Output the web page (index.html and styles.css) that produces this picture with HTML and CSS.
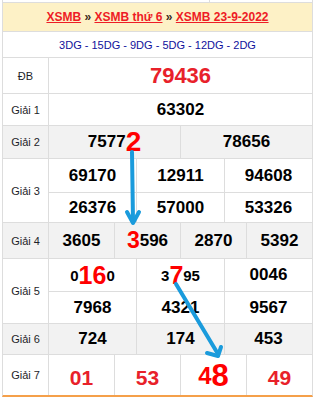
FILE: index.html
```html
<!DOCTYPE html>
<html lang="vi">
<head>
<meta charset="utf-8">
<title>XSMB 23-9-2022</title>
<link rel="stylesheet" href="styles.css">
</head>
<body>
<div class="screen">
  <div class="sheet">
    <div class="stub"><div class="stub-cell"></div><div></div></div>
    <div class="head"><a href="#">XSMB</a> » <a href="#">XSMB thứ 6</a> » <a href="#">XSMB 23-9-2022</a></div>
    <div class="codes">3DG - 15DG - 9DG - 5DG - 12DG - 2DG</div>

    <div class="row c1 h-db">
      <div class="lbl">ĐB</div>
      <div class="cell db">79436</div>
    </div>
    <div class="row c1 h-g1">
      <div class="lbl">Giải 1</div>
      <div class="cell">63302</div>
    </div>
    <div class="row c2 h-g2 shade">
      <div class="lbl">Giải 2</div>
      <div class="cell">7577<span class="hot hot-lg">2</span></div>
      <div class="cell">78656</div>
    </div>
    <div class="row c3 h-g3">
      <div class="lbl tall">Giải 3</div>
      <div class="cell">69170</div>
      <div class="cell">12911</div>
      <div class="cell">94608</div>
      <div class="cell">26376</div>
      <div class="cell">57000</div>
      <div class="cell">53326</div>
    </div>
    <div class="row c4 h-g4 shade">
      <div class="lbl">Giải 4</div>
      <div class="cell">3605</div>
      <div class="cell"><span class="hot hot-sm">3</span>596</div>
      <div class="cell">2870</div>
      <div class="cell">5392</div>
    </div>
    <div class="row c3 h-g5">
      <div class="lbl tall">Giải 5</div>
      <div class="cell small">0<span class="hot hot-md">16</span>0</div>
      <div class="cell small">3<span class="hot hot-md">7</span>95</div>
      <div class="cell">0046</div>
      <div class="cell">7968</div>
      <div class="cell">4321</div>
      <div class="cell">9567</div>
    </div>
    <div class="row c3 h-g6 shade">
      <div class="lbl">Giải 6</div>
      <div class="cell">724</div>
      <div class="cell">174</div>
      <div class="cell">453</div>
    </div>
    <div class="row c4 h-g7">
      <div class="lbl">Giải 7</div>
      <div class="cell g7">01</div>
      <div class="cell g7">53</div>
      <div class="cell g7 g7-hot"><span class="g7-mid">4</span><span class="hot hot-xl">8</span></div>
      <div class="cell g7">49</div>
    </div>
  </div>

  <svg class="arrows" viewBox="0 0 315 397" width="315" height="397" aria-hidden="true">
    <g fill="none" stroke="#1a9bdc" stroke-width="4" stroke-linecap="round" stroke-linejoin="round">
      <line x1="132" y1="152" x2="133" y2="221"/>
      <polyline points="127,212 133,223 139,212"/>
      <line x1="176" y1="284" x2="218" y2="354"/>
      <polyline points="207,353 218,356 221,347"/>
    </g>
  </svg>
</div>
</body>
</html>
```

FILE: styles.css
```css
* { box-sizing: border-box; }

body {
  margin: 0;
  background: #fff;
  font-family: "Liberation Sans", Arial, sans-serif;
}

.screen {
  position: relative;
  width: 315px;
  height: 397px;
  overflow: hidden;
}

.sheet {
  margin-left: 2px;
  width: 311px;
  border-left: 1px solid #ddd;
  border-right: 1px solid #ddd;
  border-bottom: 2px solid #f5a04a;
}

.stub {
  height: 2px;
  display: grid;
  grid-template-columns: 207px 1fr;
}

.stub-cell { border-right: 1px solid #ddd; }

.head {
  height: 29px;
  border-top: 1px solid #ddd;
  background: #fdf1c6;
  display: flex;
  align-items: center;
  justify-content: center;
  font-size: 12px;
  font-weight: bold;
  color: #3a2a1a;
  white-space: pre;
}

.head a {
  color: #ee1c25;
  text-decoration: underline;
}

.codes {
  height: 26px;
  border-top: 1px solid #ddd;
  display: flex;
  align-items: center;
  justify-content: center;
  font-size: 11px;
  color: #10109c;
}

.row {
  display: grid;
  gap: 1px;
  background: #ddd;
  border-top: 1px solid #ddd;
}

.c1 { grid-template-columns: 45px 1fr; }
.c2 { grid-template-columns: 45px 1fr 1fr; }
.c3 { grid-template-columns: 45px repeat(3, 1fr); }
.c4 { grid-template-columns: 45px repeat(4, 1fr); }

.h-db { grid-template-rows: 35px; }
.h-g1 { grid-template-rows: 31px; }
.h-g2 { grid-template-rows: 32px; }
.h-g3 { grid-template-rows: 33px 29px; }
.h-g4 { grid-template-rows: 35px; }
.h-g5 { grid-template-rows: 32px 31px; }
.h-g6 { grid-template-rows: 30px; }
.h-g7 { grid-template-rows: 40px; }

.lbl {
  display: flex;
  align-items: center;
  justify-content: center;
  background: #fff;
  font-size: 11px;
  color: #1e1e2a;
}

.lbl.tall { grid-row: span 2; }

.cell {
  display: flex;
  align-items: center;
  justify-content: center;
  background: #fff;
  font-size: 17px;
  font-weight: bold;
  color: #000;
  white-space: nowrap;
}

.shade .lbl,
.shade .cell { background: #f2f2f2; }

.cell.db {
  font-size: 22px;
  color: #e8212a;
}

.cell.small { font-size: 15px; }

.cell.g7 {
  font-size: 21px;
  color: #e8212a;
  padding-top: 5px;
}

.cell.g7-hot {
  padding-top: 1px;
  color: #ff0000;
}

.g7-mid { font-size: 24px; }

.hot { color: #ff0000; }
.hot-sm { font-size: 23px; }
.hot-md { font-size: 25px; }
.hot-lg { font-size: 28px; }
.hot-xl { font-size: 31px; }

.arrows {
  position: absolute;
  left: 0;
  top: 0;
  pointer-events: none;
}
```
